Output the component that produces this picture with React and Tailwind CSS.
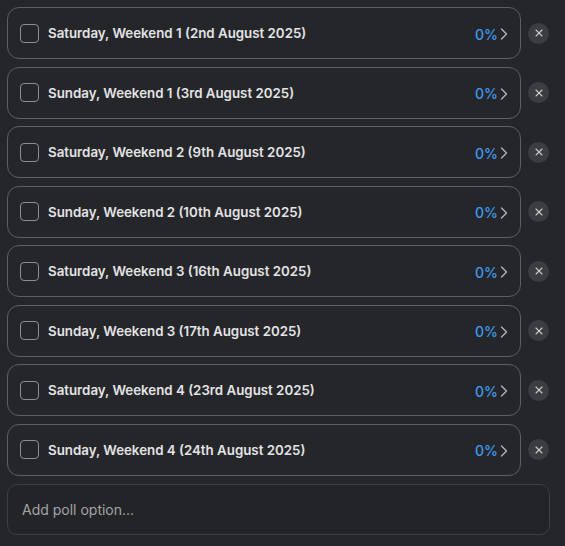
import { useState } from "react";
import { X } from "lucide-react";

const options = [
  "Saturday, Weekend 1 (2nd August 2025)",
  "Sunday, Weekend 1 (3rd August 2025)",
  "Saturday, Weekend 2 (9th August 2025)",
  "Sunday, Weekend 2 (10th August 2025)",
  "Saturday, Weekend 3 (16th August 2025)",
  "Sunday, Weekend 3 (17th August 2025)",
  "Saturday, Weekend 4 (23rd August 2025)",
  "Sunday, Weekend 4 (24th August 2025)",
];

function PollRow({ label }) {
  return (
    <div className="flex items-center">
      <div className="flex h-[52px] w-[514px] items-center rounded-[12px] border border-[#5e5f62] pl-[12px] pr-[12px]">
        <div className="h-[19px] w-[19px] rounded-[4px] border-[1.5px] border-[#8d8e91]" />
        <span className="ml-[9px] mt-[2px] text-[13.3px] font-semibold text-[#e3e3e5]">{label}</span>
        <span className="ml-auto mt-[2px] text-[14px] font-medium text-[#3d9bf0]">0%</span>
        {/* chevron */}
        <svg width="8" height="12" viewBox="0 0 8 12" className="ml-[2px] mt-[2px]">
          <polyline
            points="1.5,1 6.5,6 1.5,11"
            fill="none"
            stroke="#b3b4b7"
            strokeWidth="1.4"
            strokeLinecap="round"
            strokeLinejoin="round"
          />
        </svg>
      </div>
      <button className="ml-[7px] flex h-[21px] w-[21px] items-center justify-center rounded-full bg-[#3c3d40] text-[#c9cacc]">
        <X size={12} strokeWidth={2.2} />
      </button>
    </div>
  );
}

export default function App() {
  const [value, setValue] = useState("");
  return (
    <div
      className="min-h-[546px] bg-[#25262a] pl-[7px] pt-[7px]"
      style={{ fontFamily: "Inter, 'Noto Sans', sans-serif" }}
    >
      <div className="flex flex-col gap-[7.5px]">
        {options.map((o) => (
          <PollRow key={o} label={o} />
        ))}
      </div>
      <input
        value={value}
        onChange={(e) => setValue(e.target.value)}
        placeholder="Add poll option..."
        className="mt-[8px] h-[51px] w-[543px] rounded-[10px] border border-[#3e3f42] bg-[#232427] px-[14px] text-[14px] text-[#e3e3e5] outline-none placeholder:text-[#a4a5a8]"
      />
    </div>
  );
}
